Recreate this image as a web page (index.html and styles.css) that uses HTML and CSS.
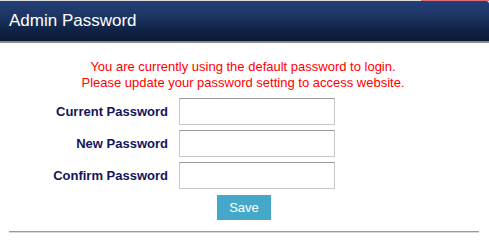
FILE: index.html
```html
<!DOCTYPE html>
<html>
<head>
<meta charset="utf-8">
<link rel="stylesheet" href="styles.css">
</head>
<body>
<div class="topstrip"><span class="strip-left"></span><span class="strip-right"></span></div>
<div class="header">Admin Password</div>
<div class="content">
  <p class="notice">You are currently using the default password to login.<br>Please update your password setting to access website.</p>
  <div class="form">
    <label class="label">Current Password</label><input class="field" type="password">
    <label class="label">New Password</label><input class="field" type="password">
    <label class="label">Confirm Password</label><input class="field" type="password">
  </div>
  <div class="actions"><button class="save">Save</button></div>
  <div class="rule"></div>
</div>
</body>
</html>
```
FILE: styles.css
```css
html, body {
  margin: 0;
  padding: 0;
  background: #ffffff;
  font-family: "Liberation Sans", Arial, sans-serif;
}
.topstrip {
  display: flex;
  height: 1px;
}
.strip-left {
  flex: 0 0 421px;
  background: #dcdcdc;
}
.strip-right {
  flex: 1;
  background: #d8707c;
}
.header {
  height: 40px;
  line-height: 40px;
  padding-left: 9px;
  color: #ffffff;
  font-size: 17px;
  background: linear-gradient(to bottom, #233f76 0%, #1d3666 35%, #0f2244 75%, #0a1833 100%);
  border-top-right-radius: 3px;
  border-bottom: 2px solid #8a8a8a;
}
.content {
  padding-top: 16px;
}
.notice {
  margin: 0 3px 0 0;
  text-align: center;
  color: #ff0000;
  font-size: 13px;
  line-height: 16px;
}
.form {
  display: grid;
  grid-template-columns: 168px 156px;
  column-gap: 11px;
  row-gap: 5px;
  align-items: center;
  margin-top: 7px;
}
.label {
  text-align: right;
  font-weight: bold;
  font-size: 13px;
  color: #14145a;
}
.field {
  box-sizing: border-box;
  width: 156px;
  height: 27px;
  margin: 0;
  padding: 2px 4px;
  border: 1px solid #c8c8c8;
  border-top: 1px solid #9a9a9a;
  background: #ffffff;
  outline: none;
}
.actions {
  display: flex;
  justify-content: center;
  margin-top: 6px;
  padding-right: 1px;
}
.save {
  width: 54px;
  height: 25px;
  border: none;
  background: #46a8c9;
  color: #ffffff;
  font-family: "Liberation Sans", Arial, sans-serif;
  font-size: 13px;
  padding: 0;
}
.rule {
  margin: 11px 10px 0 9px;
  height: 1px;
  border-top: 1px solid #9a9a9a;
  background: #d8d8d8;
}
```
